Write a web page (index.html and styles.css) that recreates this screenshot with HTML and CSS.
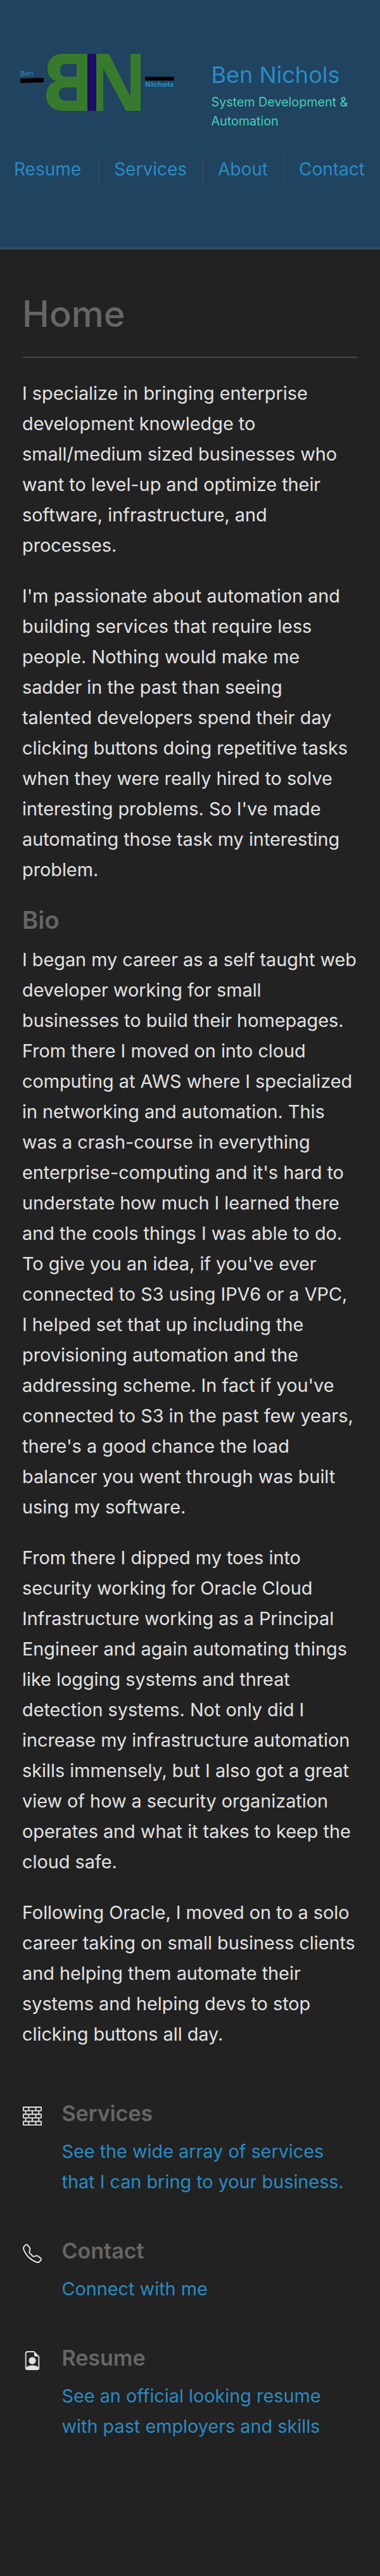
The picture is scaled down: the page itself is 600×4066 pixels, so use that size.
FILE: index.html
```html
<!DOCTYPE html>
<html lang="en">
<head>
    <meta charset="utf-8" />
    <title>Ben Nichols</title>
    <link rel="stylesheet" href="styles.css">
</head>
<body>
    <header class="site-header">
        <div class="brand">
            <svg class="logo" viewBox="0 0 300 170" width="300" height="170" role="img" aria-label="BN logo">
                <path fill="#377a2e" fill-rule="evenodd" d="M138 45H100C84 45 75 54 75 68C75 78 80 85 89 88C79 91 73 99 73 111C73 126 84 135 101 135H138ZM121 61H104C97 61 95 65 95 71C95 77 97 81 104 81H121ZM121 98H103C96 98 93 102 93 108C93 115 97 119 104 119H121Z"/>
                <rect x="138" y="45" width="14" height="90" fill="#1c0c63"/>
                <path fill="#377a2e" d="M152 45H172L206 113V45H222V135H199L163 68V135H152Z"/>
                <path fill="#000" d="M32 84L69 83V90L32 91Z"/>
                <rect x="229" y="81" width="46" height="6" fill="#000"/>
                <text class="logo-text" x="32" y="80">Ben</text>
                <text class="logo-text logo-text-bold" x="229" y="97">Nichols</text>
            </svg>
            <div class="brand-text">
                <h2 class="brand-name">Ben Nichols</h2>
                <p class="brand-tag">System Development &amp; Automation</p>
            </div>
        </div>
        <nav class="main-nav">
            <a href="#resume">Resume</a>
            <a href="#services">Services</a>
            <a href="#about">About</a>
            <a href="#contact">Contact</a>
        </nav>
    </header>
    <main class="content">
        <h1 class="page-title">Home</h1>
        <p>I specialize in bringing enterprise development knowledge to small/medium sized businesses who want to level-up and optimize their software, infrastructure, and processes.</p>
        <p>I'm passionate about automation and building services that require less people. Nothing would make me sadder in the past than seeing talented developers spend their day clicking buttons doing repetitive tasks when they were really hired to solve interesting problems. So I've made automating those task my interesting problem.</p>
        <h2 class="section-title">Bio</h2>
        <p>I began my career as a self taught web developer working for small businesses to build their homepages. From there I moved on into cloud computing at AWS where I specialized in networking and automation. This was a crash-course in everything enterprise-computing and it's hard to understate how much I learned there and the cools things I was able to do. To give you an idea, if you've ever connected to S3 using IPV6 or a VPC, I helped set that up including the provisioning automation and the addressing scheme. In fact if you've connected to S3 in the past few years, there's a good chance the load balancer you went through was built using my software.</p>
        <p>From there I dipped my toes into security working for Oracle Cloud Infrastructure working as a Principal Engineer and again automating things like logging systems and threat detection systems. Not only did I increase my infrastructure automation skills immensely, but I also got a great view of how a security organization operates and what it takes to keep the cloud safe.</p>
        <p>Following Oracle, I moved on to a solo career taking on small business clients and helping them automate their systems and helping devs to stop clicking buttons all day.</p>

        <ul class="links">
            <li class="link-item">
                <svg class="link-icon" viewBox="0 0 16 16" fill="currentColor"><path d="M0 .5A.5.5 0 0 1 .5 0h15a.5.5 0 0 1 .5.5v3a.5.5 0 0 1-.5.5H14v2h1.5a.5.5 0 0 1 .5.5v3a.5.5 0 0 1-.5.5H14v2h1.5a.5.5 0 0 1 .5.5v3a.5.5 0 0 1-.5.5H.5a.5.5 0 0 1-.5-.5v-3a.5.5 0 0 1 .5-.5H2v-2H.5a.5.5 0 0 1-.5-.5v-3A.5.5 0 0 1 .5 6H2V4H.5a.5.5 0 0 1-.5-.5v-3zM3 4v2h4.5V4H3zm5.5 0v2H13V4H8.5zM3 10v2h4.5v-2H3zm5.5 0v2H13v-2H8.5zM1 1v2h3.5V1H1zm4.5 0v2h5V1h-5zm6 0v2H15V1h-3.5zM1 7v2h3.5V7H1zm4.5 0v2h5V7h-5zm6 0v2H15V7h-3.5zM1 13v2h3.5v-2H1zm4.5 0v2h5v-2h-5zm6 0v2H15v-2h-3.5z"/></svg>
                <div class="link-body">
                    <h3>Services</h3>
                    <a href="#services">See the wide array of services that I can bring to your business.</a>
                </div>
            </li>
            <li class="link-item">
                <svg class="link-icon" viewBox="0 0 16 16" fill="currentColor"><path d="M3.654 1.328a.678.678 0 0 0-1.015-.063L1.605 2.3c-.483.484-.661 1.169-.45 1.77a17.568 17.568 0 0 0 4.168 6.608 17.569 17.569 0 0 0 6.608 4.168c.601.211 1.286.033 1.77-.45l1.034-1.034a.678.678 0 0 0-.063-1.015l-2.307-1.794a.678.678 0 0 0-.58-.122l-2.19.547a1.745 1.745 0 0 1-1.657-.459L5.482 8.062a1.745 1.745 0 0 1-.46-1.657l.548-2.19a.678.678 0 0 0-.122-.58L3.654 1.328zM1.884.511a1.745 1.745 0 0 1 2.612.163L6.29 2.98c.329.423.445.974.315 1.494l-.547 2.19a.678.678 0 0 0 .178.643l2.457 2.457a.678.678 0 0 0 .644.178l2.189-.547a1.745 1.745 0 0 1 1.494.315l2.306 1.794c.829.645.905 1.87.163 2.611l-1.034 1.034c-.74.74-1.846 1.065-2.877.702a18.634 18.634 0 0 1-7.01-4.42 18.634 18.634 0 0 1-4.42-7.009c-.362-1.03-.037-2.137.703-2.877L1.885.511z"/></svg>
                <div class="link-body">
                    <h3>Contact</h3>
                    <a href="#contact">Connect with me</a>
                </div>
            </li>
            <li class="link-item">
                <svg class="link-icon" viewBox="0 0 16 16" fill="currentColor"><path d="M11 8a3 3 0 1 1-6 0 3 3 0 0 1 6 0z"/><path d="M14 14V4.5L9.5 0H4a2 2 0 0 0-2 2v12a2 2 0 0 0 2 2h8a2 2 0 0 0 2-2zM9.5 3A1.5 1.5 0 0 0 11 4.5h2v9.255S12 12 8 12s-5 1.755-5 1.755V2a1 1 0 0 1 1-1h5.5v2z"/></svg>
                <div class="link-body">
                    <h3>Resume</h3>
                    <a href="#resume">See an official looking resume with past employers and skills</a>
                </div>
            </li>
        </ul>
    </main>
</body>
</html>
```

FILE: styles.css
```css
html, body {
    margin: 0;
    padding: 0;
    background: #222222;
    font-family: Inter, "Liberation Sans", sans-serif;
    color: #e2e2e2;
}

.site-header {
    height: 390px;
    background: #204360;
    border-bottom: 4px solid #33475a;
    overflow: hidden;
}
.brand {
    display: flex;
    align-items: flex-start;
    padding-top: 40px;
}
.logo {
    flex: none;
    width: 300px;
    height: 170px;
    margin-right: 33.5px;
}
.logo-text {
    font-family: "DejaVu Sans", sans-serif;
    font-size: 11px;
    fill: #2a8bc4;
}
.logo-text-bold {
    font-weight: bold;
}
.brand-text {
    width: 235px;
    padding-top: 56px;
}
.brand-name {
    margin: 0;
    font-size: 36px;
    font-weight: 400;
    line-height: 44px;
    color: #2a8bc4;
}
.brand-tag {
    margin: 6px 0 0;
    font-size: 19.7px;
    line-height: 30px;
    color: #49cdb8;
}
.main-nav {
    display: flex;
    margin-top: 36px;
}
.main-nav a {
    flex: none;
    padding: 0 24px 0 23px;
    font-size: 28px;
    line-height: 43px;
    color: #2a8bc4;
    text-decoration: none;
    border-left: 2px solid #35495c;
}
.main-nav a:first-child {
    padding: 0 27px 0 22px;
    border-left: 0;
}

.content {
    padding: 0 37px 120px 35px;
}
.page-title {
    margin: 0 -1px 0 1px;
    padding: 66px 0 33px;
    font-size: 57.6px;
    font-weight: 500;
    line-height: 70px;
    text-indent: -1px;
    color: #666666;
    border-bottom: 2px solid #484848;
}
.content p {
    margin: 32px 0;
    font-size: 28.8px;
    line-height: 48px;
}
.section-title {
    margin: 0 0 16px;
    font-size: 38.4px;
    font-weight: 600;
    line-height: 46px;
    color: #666666;
}
.content .section-title + p {
    margin-top: 0;
}

.links {
    list-style: none;
    margin: 79px 0 0;
    padding: 0;
}
.link-item {
    display: flex;
    margin-bottom: 63px;
}
.link-icon {
    flex: none;
    width: 30px;
    height: 30px;
    margin: 11px 31.5px 0 1px;
    color: #e0e0e0;
}
.link-body h3 {
    margin: 0 0 14px;
    font-size: 34px;
    font-weight: 600;
    line-height: 44px;
    color: #666666;
}
.link-body a {
    display: block;
    font-size: 28.8px;
    line-height: 48px;
    color: #2a8bc4;
    text-decoration: none;
}
```
